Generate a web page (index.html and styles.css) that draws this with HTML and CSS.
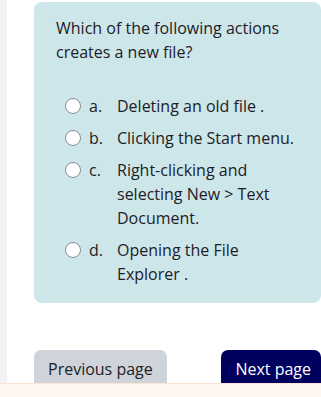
FILE: index.html
```html
<!DOCTYPE html>
<html>
<head>
<meta charset="utf-8">
<link rel="stylesheet" href="styles.css">
</head>
<body>
<div class="layout">
  <div class="sidebar"></div>
  <main class="main">
    <section class="card">
      <p class="question">Which of the following actions creates a new file?</p>
      <div class="options">
        <label class="option"><span class="radio"></span><span class="letter">a.</span><span class="text">Deleting an old file .</span></label>
        <label class="option"><span class="radio"></span><span class="letter">b.</span><span class="text">Clicking the Start menu.</span></label>
        <label class="option"><span class="radio"></span><span class="letter">c.</span><span class="text">Right-clicking and selecting New &gt; Text Document.</span></label>
        <label class="option"><span class="radio"></span><span class="letter">d.</span><span class="text">Opening the File Explorer .</span></label>
      </div>
    </section>
    <nav class="pager">
      <button class="btn btn-prev">Previous page</button>
      <button class="btn btn-next">Next page</button>
    </nav>
  </main>
</div>
<div class="footer-strip"></div>
</body>
</html>
```
FILE: styles.css
```css
* { box-sizing: border-box; }
html, body { margin: 0; padding: 0; background: #fff; }
body {
  font-family: "Open Sans", "Noto Sans", sans-serif;
  font-size: 16px;
  color: #1d2125;
  overflow: hidden;
  height: 397px;
}
.layout { display: flex; min-height: 397px; }
.sidebar { width: 7px; background: #f1f2f6; flex-shrink: 0; }
.main { flex: 1; padding: 2px 0 0 27px; }
.card {
  background: #cde6ea;
  border-radius: 8px;
  padding: 14px 20px 27px 22px;
  height: 301px;
}
.question { margin: 0 0 30px; line-height: 24px; }
.options { display: flex; flex-direction: column; gap: 8px; padding-left: 9px; }
.option { display: flex; align-items: flex-start; line-height: 24px; }
.radio {
  width: 16px; height: 16px; border-radius: 50%;
  border: 1px solid #8a8d90; background: #fff;
  margin-top: 4px; flex-shrink: 0;
}
.letter { width: 36px; padding-left: 8px; flex-shrink: 0; }
.text { flex: 1; }
.pager { display: flex; justify-content: space-between; margin-top: 47px; }
.btn {
  font-family: inherit; font-size: 16px; border: 0; border-radius: 7px;
  height: 40px; padding: 0 14px 3px; line-height: 24px;
  white-space: nowrap; text-align: left;
}
.btn-prev { background: #ced4da; color: #1d2125; }
.btn-next { background: #00005e; color: #fff; padding-right: 10px; }
.footer-strip {
  position: fixed; left: 0; right: 0; bottom: 0; height: 14px;
  background: #fff5f0; border-top: 1px solid #fbe3d6;
}
```
